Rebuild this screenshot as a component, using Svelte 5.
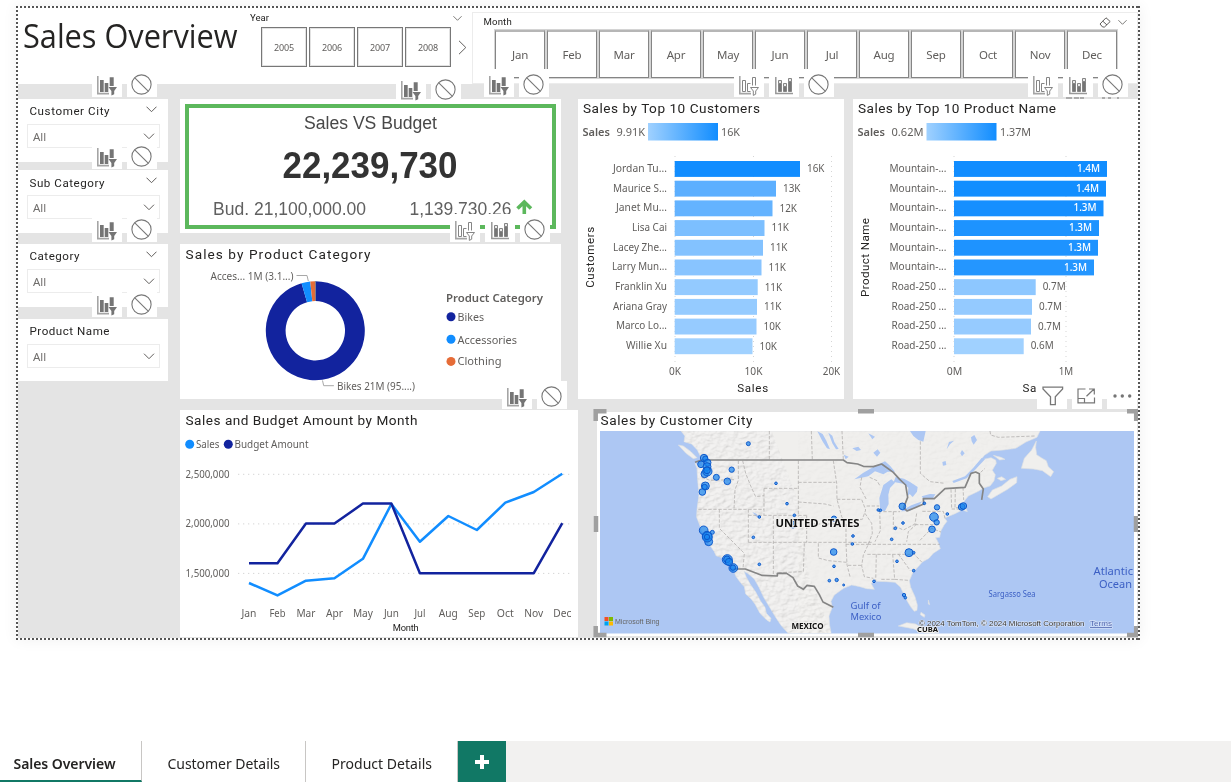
<script>
  const years = ['2005', '2006', '2007', '2008'];
  const months = ['Jan', 'Feb', 'Mar', 'Apr', 'May', 'Jun', 'Jul', 'Aug', 'Sep', 'Oct', 'Nov', 'Dec'];
  const filters = [
    { name: 'Customer City', w: 80, tools: true },
    { name: 'Sub Category', w: 75, tools: true },
    { name: 'Category', w: 50, tools: true },
    { name: 'Product Name', w: 80, tools: false }
  ];
  const customers = [
    ['Jordan Tu...', 54, 800, '16K', '#118dff'],
    ['Maurice S...', 54, 776, '13K', '#5cafff'],
    ['Janet Mu...', 51, 772.5, '12K', '#64b3ff'],
    ['Lisa Cai', 35, 764.5, '11K', '#7cbfff'],
    ['Lacey Zhe...', 54, 763, '11K', '#83c2ff'],
    ['Larry Mun...', 55, 761.5, '11K', '#88c4ff'],
    ['Franklin Xu', 52, 757.7, '11K', '#93caff'],
    ['Ariana Gray', 54, 757, '11K', '#95cbff'],
    ['Marco Lo...', 51, 756.5, '10K', '#96cbff'],
    ['Willie Xu', 41, 752.5, '10K', '#a0d1ff']
  ];
  const products = [
    ['Mountain-...', 57, 1107, '1.4M', '#118dff'],
    ['Mountain-...', 57, 1106, '1.4M', '#128eff'],
    ['Mountain-...', 57, 1103.5, '1.3M', '#168fff'],
    ['Mountain-...', 57, 1099, '1.3M', '#1d93ff'],
    ['Mountain-...', 57, 1098, '1.3M', '#1e93ff'],
    ['Mountain-...', 57, 1094, '1.3M', '#2496ff'],
    ['Road-250 ...', 55, 1035.7, '0.7M', '#8dc7ff'],
    ['Road-250 ...', 55, 1032, '0.7M', '#94caff'],
    ['Road-250 ...', 55, 1031, '0.7M', '#96cbff'],
    ['Road-250 ...', 55, 1023.7, '0.6M', '#a0d1ff']
  ];
  const salesY = [583, 595.4, 580.7, 578.3, 558.8, 504, 541.8, 516, 530, 502.7, 492, 473.7];
  const budgetY = [563.3, 563.3, 523.5, 523.5, 503.6, 503.6, 573.2, 573.2, 573.2, 573.2, 573.2, 523.2];
  const monthW = [15, 16, 19, 17, 20, 15, 11, 19, 17, 17, 19, 18];
  const mx = (i) => 249 + i * 28.48;
  const line = (ys) => ys.map((y, i) => `${mx(i)},${y}`).join(' ');

  const polar = (r, deg) => {
    const a = (deg * Math.PI) / 180;
    return `${315.3 + r * Math.sin(a)} ${330.7 - r * Math.cos(a)}`;
  };
  const slice = (a, b) =>
    `M${polar(49.5, a)} A49.5 49.5 0 ${b - a > 180 ? 1 : 0} 1 ${polar(49.5, b)} L${polar(29.7, b)} A29.7 29.7 0 ${b - a > 180 ? 1 : 0} 0 ${polar(29.7, a)} Z`;

  // City markers: x, y, radius in map units (3 per pixel)
  const cities = [
    [490, 131, 6], [357, 174, 11], [361, 176, 8], [348, 193, 10], [368, 188, 10], [366, 200, 12], [359, 222, 11],
    [367, 214, 14], [366, 211, 10], [394, 232, 9], [440, 209, 8], [427, 244, 10], [361, 258, 12], [359, 261, 8],
    [352, 276, 10], [573, 250, 4], [606, 311, 4], [628, 346, 4], [523, 351, 4], [505, 412, 4], [624, 374, 10],
    [747, 356, 8], [804, 408, 4], [802, 432, 4], [746, 456, 10], [747, 499, 4], [733, 542, 4], [755, 540, 5],
    [776, 555, 3], [867, 544, 4], [523, 493, 4], [356, 391, 13], [382, 397, 6], [366, 408, 14], [371, 425, 12],
    [367, 411, 15], [366, 411, 8], [427, 479, 15], [426, 478, 10], [432, 486, 11], [445, 504, 13], [444, 503, 8],
    [952, 319, 10], [880, 330, 4], [886, 331, 4], [1018, 310, 4], [1056, 322, 8], [1087, 342, 4], [1047, 351, 13],
    [1055, 367, 8], [1041, 388, 10], [954, 369, 4], [931, 385, 4], [920, 418, 4], [972, 458, 12], [986, 458, 4],
    [936, 484, 4], [986, 512, 4], [957, 585, 5], [961, 593, 4], [1130, 321, 10], [1135, 318, 10]
  ];
</script>

{#snippet t(x, y, s, w, cls = '', anchor = 'start')}
  <text {x} {y} class={cls} text-anchor={anchor} textLength={w} lengthAdjust={cls.startsWith('din') ? 'spacing' : 'spacingAndGlyphs'}>{s}</text>
{/snippet}

{#snippet chevron(w = 11)}
  <svg class="chev" width={w} height="7" viewBox="0 0 11 7"><path d="M.5 .7 5.5 5.7 10.5 .7" /></svg>
{/snippet}

{#snippet filterIcon(outlined = false)}
  <span class="tool">
    <svg width="20" height="20" viewBox="0 0 20 20">
      <path d="M.8 0V17.6H12" fill="none" stroke="#a5a5a5" stroke-width="1.6" />
      {#if outlined}
        <g fill="none" stroke="#858585">
          <path d="M3.5 4.5h3v11h-3zM11.5 7.5h-3v8h3M13.5 9.5v-8h3v8" />
          <path d="M11.5 11.5h8l-2.8 3.5v3.2l-2.4 1.2V15z" fill="#fff" />
        </g>
      {:else}
        <g fill="#757575">
          <path d="M3 4h3.7v12H3zM7.7 7h3.6v9H7.7zM12.7 1.2h4V10h-4z" />
          <path d="M11.5 11H20l-2.8 4v3.3l-2.8 1.2V15z" />
        </g>
      {/if}
    </svg>
  </span>
{/snippet}

{#snippet barsIcon()}
  <span class="tool bars">
    <svg width="19" height="20" viewBox="0 0 19 20">
      <path d="M.8 1V17.6H18" fill="none" stroke="#999" stroke-width="1.5" />
      <g fill="#757575" stroke="#858585">
        <path d="M3.5 7.5h3v8h-3zM8.5 10.5h3v5h-3zM13.5 5.5h3v10h-3z" />
      </g>
      <path d="M3.5 4.5h3v3h-3zM8.5 7.5h3v3h-3zM13.5 2.5h3v3h-3z" fill="#e8e8e8" stroke="#858585" />
    </svg>
  </span>
{/snippet}

{#snippet noneIcon()}
  <span class="tool none">
    <svg width="21" height="21" viewBox="0 0 21 21" fill="none" stroke="#777" stroke-width="1.1">
      <circle cx="10.5" cy="10.5" r="9.6" /><path d="M3.8 3.8 17.2 17.2" />
    </svg>
  </span>
{/snippet}

{#snippet tools(full = false)}
  {@render filterIcon(full)}
  {#if full}{@render barsIcon()}{/if}
  {@render noneIcon()}
{/snippet}

<div class="page">
  <main class="canvas">
    <div class="dots top"></div>
    <div class="dots bottom"></div>
    <div class="dots left"></div>
    <div class="dots right"></div>

    <header>
      <section class="title">
        <svg width="222" height="60" viewBox="18 8 222 60">
          {@render t(23, 47.5, 'Sales Overview', 214.5, 'h1')}
        </svg>
        <div class="tools t-title">{@render tools()}</div>
      </section>
      <section class="year">
        <div class="slicer-head"><span>Year</span>{@render chevron(9)}</div>
        <div class="year-row">
          {#each years as y}<button>{y}</button>{/each}
          <svg class="next" width="9" height="15" viewBox="0 0 9 15"><path d="M1 .8 7.8 7.5 1 14.2" /></svg>
        </div>
        <div class="tools t-year">{@render tools()}</div>
      </section>
      <section class="month">
        <div class="slicer-head">
          <span>Month</span>
          <svg class="eraser" width="12" height="11" viewBox="0 0 12 11"><path d="M1 7 7 .8 11.2 4.5 5.5 10H3.6zM3.8 4.2 8 8" /></svg>
          {@render chevron(9)}
        </div>
        <div class="month-row">
          {#each months as m}<button>{m}</button>{/each}
        </div>
        <div class="tools t-month">{@render tools()}</div>
        <div class="tools t-cust">{@render tools(true)}</div>
        <div class="tools t-prod">
          {@render tools(true)}
          <svg class="under" width="60" height="2" viewBox="0 0 60 2"><path d="M0 1h6M8 1h5M14 1h4M36 1h3M42 1h3M51 1h2" stroke="#999" stroke-width="1.4" /></svg>
        </div>
      </section>
    </header>

    <div class="body">
      <aside>
        {#each filters as f}
          <section class="filter">
            <div class="filter-head">
              <svg width="90" height="18" viewBox="0 0 90 18">{@render t(0.5, 13, f.name, f.w, 'din12')}</svg>
              {#if f.tools}{@render chevron(11)}{/if}
            </div>
            <div class="select"><span>All</span>{@render chevron(12)}</div>
            {#if f.tools}<div class="tools t-filter">{@render tools()}</div>{/if}
          </section>
        {/each}
      </aside>

      <div class="main">
        <div class="upper">
          <div class="stack">
            <section class="card kpi">
              <div class="kpi-box">
                <svg width="360" height="115" viewBox="189 108 360 115">
                  {@render t(304, 129, 'Sales VS Budget', 133, 'kt')}
                  {@render t(282.5, 178, '22,239,730', 175, 'kv')}
                  {@render t(213, 214.8, 'Bud. 21,100,000.00', 153, 'ks')}
                  {@render t(409.5, 214.8, '1,139,730.26', 102, 'ks')}
                  <path d="M517.5 208.5 524.3 202 531 208.5M524.3 203.5V215" fill="none" stroke="#5cb85c" stroke-width="3.6" />
                </svg>
              </div>
              <div class="tools t-kpi">{@render tools(true)}</div>
            </section>

            <section class="card donut">
              <svg width="381" height="155" viewBox="180 244 381 155">
                {@render t(185.5, 259, 'Sales by Product Category', 185, 'din')}
                <path d={slice(0, 343.9)} fill="#12239e" />
                <path d={slice(343.9, 354.2)} fill="#118dff" />
                <path d={slice(354.2, 360)} fill="#e66c37" />
                <path d="M315.4 281v20" stroke="#888" stroke-width=".8" />
                <path d="M296.5 275.5h10.5l1.3 5.5M322.5 380.5l1.2 5.2h10.2" fill="none" stroke="#a8a8a8" />
                {@render t(210.5, 280, 'Acces... 1M (3.1...)', 83, 'lab')}
                {@render t(337, 390, 'Bikes 21M (95....)', 78, 'lab')}
                {@render t(446, 302, 'Product Category', 97, 'leg b')}
                <circle cx="451" cy="316.8" r="4.5" fill="#12239e" />
                <circle cx="451" cy="339.3" r="4.5" fill="#118dff" />
                <circle cx="451" cy="361.4" r="4.5" fill="#e66c37" />
                {@render t(457.5, 321, 'Bikes', 26.5, 'leg')}
                {@render t(457.5, 344, 'Accessories', 59.5, 'leg')}
                {@render t(457.5, 365.3, 'Clothing', 44, 'leg')}
              </svg>
              <div class="tools t-donut">{@render tools()}</div>
            </section>
          </div>

          <section class="card customers">
            <svg width="266" height="300" viewBox="578 99 266 300">
              <defs>
                <linearGradient id="scale"><stop stop-color="#a0d1ff" /><stop offset="1" stop-color="#118dff" /></linearGradient>
              </defs>
              {@render t(583, 113, 'Sales by Top 10 Customers', 177, 'din')}
              {@render t(582.5, 136, 'Sales', 27.5, 'leg b')}
              {@render t(616.5, 136, '9.91K', 28.5, 'leg')}
              <rect x="648" y="123" width="70" height="17.5" fill="url(#scale)" />
              {@render t(721, 136, '16K', 19, 'leg')}
              <path class="grid" d="M675 156V363M753.5 156V363M831.5 156V363" />
              {#each customers as [n, w, end, v, c], i}
                {@render t(667, 171.8 + i * 19.7, n, w, 'lab', 'end')}
                <rect x="674.7" y={161 + i * 19.7} width={end - 674.7} height="15.9" fill={c} />
                {@render t(end + 7, 172.3 + i * 19.7, v, 17.5, 'lab')}
              {/each}
              {@render t(675, 375, '0K', 12, 'lab', 'middle')}
              {@render t(753.5, 375, '10K', 18, 'lab', 'middle')}
              {@render t(831.5, 375, '20K', 17.5, 'lab', 'middle')}
              {@render t(752.7, 391.8, 'Sales', 31, 'din12', 'middle')}
              <g transform="translate(594 257.3) rotate(-90)">{@render t(0, 0, 'Customers', 61, 'din12', 'middle')}</g>
            </svg>
          </section>

          <section class="card products">
            <svg width="285" height="300" viewBox="853 99 285 300">
              {@render t(858, 113, 'Sales by Top 10 Product Name', 198, 'din')}
              {@render t(857.5, 136, 'Sales', 27.5, 'leg b')}
              {@render t(891.5, 136, '0.62M', 32, 'leg')}
              <rect x="926.5" y="123" width="70" height="17.5" fill="url(#scale)" />
              {@render t(1000, 136, '1.37M', 31, 'leg')}
              <path class="grid" d="M954 156V363M1066 156V363" />
              {#each products as [n, w, end, v, c], i}
                {@render t(946.5, 171.8 + i * 19.7, n, w, 'lab', 'end')}
                <rect x="954" y={161 + i * 19.7} width={end - 954} height="15.9" fill={c} />
                {@render t(i < 6 ? end - 7 : end + 7, 172 + i * 19.7, v, 23, i < 6 ? 'lab inv' : 'lab', i < 6 ? 'end' : 'start')}
              {/each}
              {@render t(954.5, 375, '0M', 15.5, 'lab', 'middle')}
              {@render t(1066, 375, '1M', 14.5, 'lab', 'middle')}
              {@render t(1038, 391.8, 'Sales', 31, 'din12', 'middle')}
              <g transform="translate(869 257.5) rotate(-90)">{@render t(0, 0, 'Product Name', 79, 'din12', 'middle')}</g>
            </svg>
            <div class="tools t-map">
              <span class="tool map-tool">
                <svg width="22" height="20" viewBox="0 0 22 20"><path d="M1 1.2H20.6V3L13.3 10.8V18.6H8.5V10.8L1 3Z" fill="none" stroke="#777" stroke-width="1.3" /></svg>
              </span>
              <span class="tool map-tool">
                <svg width="19" height="16" viewBox="0 0 19 16" fill="none" stroke="#777" stroke-width="1.2"><path d="M8.5 1H1V14.8H17.5V9.5M1 10.5H7.5V14.8M9.5 8.3 16.8 1.2M12 1h5.3v5.5" /></svg>
              </span>
              <span class="tool map-tool">
                <svg width="21" height="6" viewBox="0 0 21 6" fill="#757575"><circle cx="3" cy="3" r="1.7" /><circle cx="10.3" cy="3" r="1.7" /><circle cx="17.7" cy="3" r="1.7" /></svg>
              </span>
            </div>
          </section>
        </div>

        <div class="lower">
          <section class="card trend">
            <svg width="398" height="227" viewBox="180 410 398 227">
              {@render t(185.5, 425.2, 'Sales and Budget Amount by Month', 232, 'din')}
              <circle cx="189.7" cy="444.2" r="4.5" fill="#118dff" />
              {@render t(196, 448, 'Sales', 23.5, 'lab')}
              <circle cx="228.3" cy="444.2" r="4.5" fill="#12239e" />
              {@render t(234.5, 448, 'Budget Amount', 74, 'lab')}
              <path class="grid wide" d="M238 474.3H571M238 523.9H571M238 573.4H571" />
              {@render t(185.5, 478, '2,500,000', 44, 'lab')}
              {@render t(185.5, 527.3, '2,000,000', 44, 'lab')}
              {@render t(185.5, 577, '1,500,000', 44, 'lab')}
              <g fill="none" stroke-width="2.5" stroke-linejoin="round">
                <polyline points={line(salesY)} stroke="#118dff" />
                <polyline points={line(budgetY)} stroke="#12239e" />
              </g>
              {#each months as m, i}{@render t(mx(i), 617, m, monthW[i], 'lab', 'middle')}{/each}
              {@render t(405.7, 630.7, 'Month', 26, 'din10', 'middle')}
            </svg>
          </section>

          <section class="card map">
            <svg width="540" height="224" viewBox="597 412 540 224">
              <defs>
                <clipPath id="view"><rect x="600" y="431" width="534" height="202.5" /></clipPath>
                <clipPath id="west"><path d="M280 93H560L650 330 670 520 740 701H270Z" /></clipPath>
                <path id="land" d="M288 93 300 108 297 125 320 132 337 150 346 168 350 182 352 200 345 198 330 190 336 205 338 240 342 285 336 328 335 352 343 372 350 392 362 412 372 432 388 455 393 467 414 474 432 488 446 508 452 528 468 550 478 560 482 582 498 596 510 612 525 640 545 660 555 666 558 655 544 640 540 622 526 602 512 576 496 553 484 532 477 514 488 520 508 537 522 562 536 592 554 622 572 652 588 676 612 703H739L734 676 732 648 742 622 738 604 748 585 776 565 800 555 825 560 845 566 868 568 858 550 875 544 905 545 930 547 946 561 956 581 966 602 978 622 988 634 996 631 997 615 990 590 977 562 973 542 983 519 1012 486 1032 475 1045 460 1066 446 1060 428 1052 413 1064 412 1068 392 1077 376 1086 364 1079 354 1110 341 1132 330 1147 335 1141 320 1136 306 1150 288 1180 274 1196 264 1215 258 1227 243 1231 224 1222 211 1234 190 1232 180 1218 173 1196 178 1178 192 1198 166 1218 153 1255 150 1292 145 1323 126 1356 112 1365 93Z" />
                <clipPath id="on-land"><use href="#land" /></clipPath>
                <filter id="relief" x="0" y="0" width="1" height="1">
                  <feTurbulence type="fractalNoise" baseFrequency=".055 .085" numOctaves="4" seed="8" />
                  <feDiffuseLighting surfaceScale="7" lighting-color="#fff"><feDistantLight azimuth="225" elevation="55" /></feDiffuseLighting>
                </filter>
              </defs>
              {@render t(600.5, 425.2, 'Sales by Customer City', 152, 'din')}
              <g clip-path="url(#view)">
                <rect x="600" y="431" width="534" height="203" fill="#adc7f3" />
                <g transform="translate(585 400) scale(.33333)">
                  <g fill="#f0efed" stroke="#dcdfe3" stroke-width="2">
                    <use href="#land" />
                    <path d="M280 135 295 138 318 155 336 173 325 176 303 160ZM1208 290 1222 270 1250 258 1275 238 1296 230 1295 248 1268 268 1240 284 1218 297ZM1354 123 1340 150 1318 175 1309 205 1345 207 1372 212 1397 230 1406 215 1390 200 1384 182 1370 174 1355 164 1352 142ZM1225 166 1248 172 1260 178 1244 180ZM940 678 965 668 992 672 1012 684 1050 697 1060 702 1020 700 984 686ZM1237 235 1250 230 1262 238 1248 242Z" />
                    <path d="M1008 637l12 8-2 7-12-8zM1030 600l4 14-4-2z" />
                  </g>
                  <g clip-path="url(#on-land)">
                    <g clip-path="url(#west)">
                      <rect x="270" y="93" width="480" height="610" filter="url(#relief)" opacity=".22" style="mix-blend-mode:multiply" />
                    </g>
                    <rect x="640" y="93" width="760" height="610" filter="url(#relief)" opacity=".05" style="mix-blend-mode:multiply" />
                  </g>
                  <g fill="#adc7f3">
                    <path d="M808 238 834 219 870 198 900 184 915 197 930 215 908 215 895 223 870 214 850 229 826 234ZM886 333 883 294 895 255 919 238 930 248 915 264 910 284 911 312 900 333ZM932 231 957 236 975 246 998 261 996 275 983 291 974 282 968 289 970 263 955 251 926 246ZM946 334 979 316 1012 304 1000 319 973 333ZM1010 289 1035 282 1051 283 1044 295 1017 299ZM975 93H1022L1015 125 1000 120 985 108Z" />
                    <path d="M697 94 713 102 724 122 735 148 726 145 712 123ZM730 98 742 107 748 126 761 147 753 148 742 130ZM502 336 514 341 525 353 514 350ZM776 164l15 6-9 8zM802 145l18-5 8 10-13 3zM865 158l13-10 8 10-10 12zM1085 148 1092 126 1107 122 1095 133ZM1158 112l10-7 8 15-10 14-6-10zM1126 160l5-10 8 10-8 9zM1072 186l10-3 2 12-10 2zM850 100l20 10-8 8zM360 176l7 12-3 28-5-28z" />
                    <path d="M1102 243 1140 229 1165 203 1190 174 1200 178 1172 208 1145 235 1106 249Z" />
                  </g>
                  <g fill="none" stroke="#b2b0ae" stroke-width="2.4" stroke-dasharray="10 5">
                    <path d="M553 93V178M679 93L682 178M771 93 775 180M460 182V240L450 270 447 328M340 328H537M350 232 375 241 447 239M473 182 482 220 498 260 512 290 537 287M640 182V350M537 265H640M537 265V345M640 247H751M640 306 720 312 745 318M490 328V427M490 346H665M565 347V527M403 328V385L478 460 474 505M490 427H860M658 430 655 515 578 518M700 430V474L730 482 785 487M665 347V427M666 372H770M745 182 755 250 756 298 770 350 783 372V430L786 494 795 530M756 298H830L842 330 832 358H772M830 232 825 262 845 300M845 318H883M783 433H850M789 496H833M840 340 860 370 862 400 850 433 835 465 830 497 838 530 865 535M854 232 876 242 884 256M884 332 886 392 870 425M925 335V390M895 335H945M929 378 955 390 990 372 995 340M848 433H1065M847 463H988L1010 486M874 463 872 544M923 463 929 538 970 541M929 538H885M940 462 976 512M990 374H1065M995 372 970 395 965 425M1005 421 1040 385 1068 396M1012 334H1075L1080 355M1098 268 1100 325M1111 267 1110 324 1134 320M1100 327H1134M1134 262 1136 300M1006 124V220L1035 245 1080 250M1215 93 1217 105 1240 112 1350 108M1187 217 1200 205" />
                  </g>
                  <g fill="none" stroke="#858585" stroke-width="5" stroke-linejoin="round">
                    <path d="M330 187 350 180H775L786 188 818 192 835 199 865 200 890 192 925 217 944 238 962 255 968 292 956 323 966 333 990 323 1016 312 1015 296H1048L1080 266 1140 262 1158 220 1172 216 1183 221V250L1195 267 1190 300" />
                    <path d="M446 507H481L530 526 577 528V520H605L624 533 638 558 655 568 666 556 688 559 703 584 714 606 745 622" />
                  </g>
                  <g fill="#1683ee" fill-opacity=".7" stroke="#0b55c8" stroke-width="2.8">
                    {#each cities as [x, y, r]}<circle cx={x} cy={y} {r} />{/each}
                  </g>
                </g>
                <g class="halo">
                  {@render t(775.5, 527, 'UNITED STATES', 84, 'place')}
                  {@render t(791.5, 629, 'MEXICO', 32, 'place sm')}
                  {@render t(917, 632, 'CUBA', 21, 'place xs')}
                </g>
                {@render t(850.5, 608.5, 'Gulf of', 30, 'sea')}
                {@render t(850.5, 619.5, 'Mexico', 31, 'sea')}
                {@render t(1093.5, 574.5, 'Atlantic', 39.5, 'sea lg')}
                {@render t(1099, 588, 'Ocean', 33, 'sea lg')}
                {@render t(988.5, 596.5, 'Sargasso Sea', 47, 'sea xs')}
                {@render t(919, 626.2, '© 2024 TomTom, © 2024 Microsoft Corporation', 165.5, 'copy')}
                {@render t(1090, 626.2, 'Terms', 22, 'copy terms')}
                <path fill="#f25022" d="M604.5 617h4v4h-4z" /><path fill="#7fba00" d="M609 617h4v4h-4z" />
                <path fill="#00a4ef" d="M604.5 621.5h4v4h-4z" /><path fill="#ffb900" d="M609 621.5h4v4h-4z" />
                {@render t(615, 624, 'Microsoft Bing', 44.5, 'bing')}
              </g>
            </svg>
            <svg class="handles" width="546" height="230" viewBox="593 409 546 230">
              <path d="M595.7 421V411.3H606.5M1127 411.3H1136.2V421M595.7 626V635H606.5M1127 635H1136.2V626M858 411.3H874M858 635H874M596 516V532M1136 516V532" fill="none" stroke="#a0a0a0" stroke-width="4.5" />
            </svg>
          </section>
        </div>
      </div>
    </div>
  </main>

  <nav>
    <button class="active"><svg width="104" height="22"><text x=".5" y="15.5" textLength="102">Sales Overview</text></svg></button>
    <button><svg width="114" height="22"><text x=".5" y="15.5" textLength="112.5">Customer Details</text></svg></button>
    <button><svg width="102" height="22"><text x=".5" y="15.5" textLength="100.5">Product Details</text></svg></button>
    <button class="add" aria-label="Add page"><svg width="14" height="14"><path d="M7 0V14M0 7H14" stroke="#fff" stroke-width="4" /></svg></button>
  </nav>
</div>

<style>
  :global(body) { background: #fff; overflow: hidden; }
  * { box-sizing: border-box; }
  .page { width: 1231px; height: 782px; display: flex; flex-direction: column; justify-content: space-between; font-family: 'Noto Sans', 'Open Sans', sans-serif; color: #252423; }
  svg { display: block; flex: none; }
  button { font: inherit; padding: 0; background: #fff; border-radius: 0; }

  .canvas { position: relative; margin: 6px 0 0 16px; width: 1124px; height: 634px; padding: 2px; background: #e4e4e4; display: flex; flex-direction: column; box-shadow: 0 0 14px rgba(0, 0, 0, .06); }
  .dots { position: absolute; z-index: 5; --c: #555; }
  .dots.top, .dots.bottom { left: 0; right: 0; height: 2px; background: repeating-linear-gradient(90deg, var(--c) 0 2px, #fff 2px 4px); }
  .dots.left, .dots.right { top: 0; bottom: 0; width: 2px; background: repeating-linear-gradient(var(--c) 0 2px, #fff 2px 4px); }
  .dots.top { top: 0; } .dots.bottom { bottom: 0; } .dots.left { left: 0; } .dots.right { right: 0; }

  header { display: flex; height: 76px; background: #fff; flex: none; }
  section { position: relative; }
  .title { width: 222px; flex: none; }
  .title > svg { overflow: visible; }
  .year { width: 232px; padding: 4px 0 0 10px; flex: none; }
  .month { width: 666px; flex: none; height: 72px; margin-top: 4px; border: 1px solid #ececec; padding: 3px 0 0 10.5px; }
  .slicer-head { display: flex; align-items: center; height: 12px; font: 400 9.6px/12px Roboto, sans-serif; color: #252423; padding-right: 10px; }
  .month .slicer-head { letter-spacing: .15px; }
  .slicer-head span { flex: 1; }
  .eraser { margin-right: 7px; }
  .chev path, .next path, .eraser path { fill: none; stroke: #605e5c; stroke-width: 1; }
  .year-row { display: flex; align-items: center; gap: 2px; padding: 3px 0 0 11px; }
  .year-row button { width: 46px; height: 40px; border: 1px solid #777; outline: 1px solid #e2e2e2; outline-offset: -2px; font-size: 9px; letter-spacing: -.1px; color: #605e5c; }
  .next { margin-left: 5px; }
  .month-row { display: flex; gap: 2px; padding: 2px 0 0 11.5px; }
  .month-row button { width: 50px; height: 48px; border: 1px solid #858585; border-top: 2px solid #b6b6b6; outline: 1px solid #d4d4d4; font-size: 11.5px; color: #605e5c; letter-spacing: -.2px; }

  .tools { position: absolute; z-index: 4; display: flex; gap: 5px; height: 28px; }
  .tool { width: 30px; height: 28px; background: #fff; padding: 7px 0 0 5px; }
  .bars { padding-left: 6px; }
  .none { padding: 5px 0 0 4px; }
  .under { position: absolute; left: 38px; top: 27.5px; }
  .t-title { left: 74px; top: 61px; }
  .t-year { left: 156px; top: 66px; }
  .t-month { left: 11px; top: 56px; }
  .t-cust { left: 261px; top: 56px; }
  .t-prod { left: 555px; top: 56px; }
  .t-filter { left: 74px; bottom: -7px; }
  .filter:nth-child(2) .t-filter { bottom: -9px; }
  .filter:nth-child(3) .t-filter { bottom: -10px; }
  .t-kpi { left: 270px; bottom: -9px; }
  .t-donut { left: 322px; bottom: -10px; }
  .t-map { left: 184px; top: 284px; height: 26px; }
  .map-tool { height: 26px; width: 30px; display: flex; align-items: center; padding: 0 0 0 5px; }

  .body { display: flex; gap: 12px; padding-top: 15px; flex: 1; min-height: 0; }
  aside { width: 150px; flex: none; display: grid; grid-template-rows: 63px 63px 63px 62px; align-content: start; }
  .filter { background: #fff; padding: 3px 11px 0 11px; }
  .filter:nth-child(2) { margin-top: 8px; margin-bottom: -8px; }
  .filter:nth-child(3) { margin-top: 19px; margin-bottom: -19px; }
  .filter:nth-child(4) { margin-top: 31px; margin-bottom: -31px; }
  .filter-head { display: flex; justify-content: space-between; align-items: center; height: 18px; }
  .filter-head .chev { margin-top: -4px; }
  .filter:nth-child(2) .filter-head svg:first-child { margin-top: 2px; }
  .select { display: flex; justify-content: space-between; align-items: center; height: 24px; margin: 4px -3px 0 -2px; padding: 0 4px 0 5px; border: 1px solid #ececec; font-size: 11.5px; color: #706e6c; }

  .main { flex: 1; min-width: 0; display: flex; flex-direction: column; gap: 11px; }
  .upper { display: flex; height: 300px; }
  .stack { display: flex; flex-direction: column; gap: 11px; width: 381px; flex: none; }
  .customers { width: 266px; flex: none; margin: 0 9px 0 17px; }
  .products { width: 285px; flex: none; }
  .card { background: #fff; }
  .kpi { height: 134px; padding: 5px; }
  .kpi-box { width: 371px; height: 125px; border: 4px solid #5cb85c; }
  .donut { height: 155px; }
  .lower { display: flex; gap: 19px; height: 227px; }
  .trend { width: 398px; flex: none; }
  .map { width: 540px; flex: none; height: 224px; margin-top: 2px; }
  .handles { position: absolute; left: -4px; top: -3px; }

  text { font-family: 'Noto Sans', 'Open Sans', sans-serif; }
  .h1 { font-size: 32.5px; font-weight: 400; fill: #252423; font-family: 'Open Sans', sans-serif; }
  .din { font: 400 13.6px Roboto, sans-serif; fill: #252423; }
  .din12 { font: 400 11.6px Roboto, sans-serif; fill: #252423; }
  .din10 { font: 400 9.3px Roboto, sans-serif; fill: #252423; }
  .lab { font-size: 10.7px; fill: #605e5c; }
  .leg { font-size: 11.5px; fill: #605e5c; }
  .b { font-weight: 600; }
  .inv { fill: #fff; font-weight: 500; }
  .kt { font: 18px 'Liberation Sans', sans-serif; fill: #484848; }
  .kv { font: 700 36px 'Liberation Sans', sans-serif; fill: #333; }
  .ks { font: 18px 'Liberation Sans', sans-serif; fill: #606060; }
  .grid { stroke: #d5d5d5; stroke-width: 1; stroke-dasharray: 1 4; fill: none; }
  .wide { stroke-dasharray: 1.3 3.7; }
  .place { font-size: 11px; font-weight: 700; fill: #111; }
  .sm { font-size: 9px; }
  .place.xs { font-size: 7.5px; }
  .halo { stroke: #f4f3f1; stroke-width: 1.6px; paint-order: stroke; }
  .sea { font-size: 9.5px; fill: #3b5fc4; }
  .lg { font-size: 11.5px; }
  .sea.xs { font-size: 8px; }
  .copy { font: 8px 'Liberation Sans', sans-serif; fill: #333; stroke: #e4ecfa; stroke-width: 1px; paint-order: stroke; }
  .terms { fill: #4a63b0; text-decoration: underline; }
  .bing { font: 7.5px 'Liberation Sans', sans-serif; fill: #666; }

  nav { display: flex; height: 41px; background: #f2f1f0; }
  nav button { border: 0; border-right: 1px solid #c8c6c4; height: 41px; display: flex; align-items: center; padding: 4px 0 0 13px; width: 142px; }
  nav button:nth-child(2) { width: 164px; padding-left: 25px; }
  nav button:nth-child(3) { width: 152px; padding-left: 25px; }
  nav text { font-size: 14px; fill: #252423; }
  nav .active { border-bottom: 2px solid #117865; padding-top: 6px; }
  nav .active text { font-weight: 600; }
  nav .add { width: 48px; background: #117865; border: 0; justify-content: center; padding: 0; }
</style>
